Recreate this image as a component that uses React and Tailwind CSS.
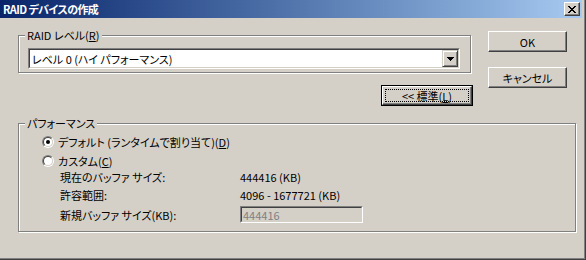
import React from 'react';

const raised =
  'border border-t-white border-l-white border-r-[#404040] border-b-[#404040] shadow-[inset_-1px_-1px_0_#808080]';
const sunkenOuter = 'border border-t-[#808080] border-l-[#808080] border-r-white border-b-white';
const sunkenInner = 'border border-t-[#404040] border-l-[#404040] border-r-[#d4d0c8] border-b-[#d4d0c8]';

const xRows = ['11000011', '01100110', '00111100', '00011000', '00111100', '01100110', '11000011'];

const CloseGlyph = () => (
  <svg width="8" height="7" viewBox="0 0 8 7" shapeRendering="crispEdges">
    {xRows.flatMap((row, y) =>
      row.split('').map((c, x) => (c === '1' ? <rect key={`${x}-${y}`} x={x} y={y} width="1" height="1" fill="#000" /> : null))
    )}
  </svg>
);

const Key = ({ children }) => <span className="underline underline-offset-[1px]">{children}</span>;

function GroupBox({ label, className, children }) {
  return (
    <div className={`relative border border-[#808080] shadow-[inset_1px_1px_0_#fff,1px_1px_0_#fff] ${className}`}>
      <span className="absolute left-[6px] top-[-8px] px-[2px] bg-[#d4d0c8] leading-[14px]">{label}</span>
      {children}
    </div>
  );
}

const Radio = ({ checked }) => (
  <div className="w-[12px] h-[12px] shrink-0 rounded-full border border-t-[#808080] border-l-[#808080] border-r-white border-b-white">
    <div className="w-full h-full rounded-full bg-white flex items-center justify-center border border-t-[#404040] border-l-[#404040] border-r-[#d4d0c8] border-b-[#d4d0c8]">
      {checked && <div className="w-[4px] h-[4px] rounded-full bg-black" />}
    </div>
  </div>
);

const Button = ({ children }) => (
  <button className={`w-[79px] h-[21px] flex items-center justify-center ${raised}`}>{children}</button>
);

export default function App() {
  return (
    <div className="w-[586px] h-[260px] overflow-hidden bg-[#d4d0c8] border-r border-b border-[#404040] text-[11px] leading-[14px] text-black font-['Noto_Sans_CJK_JP',sans-serif] [font-feature-settings:'palt']">
      <div className="h-full flex flex-col border-r border-b border-[#808080] pr-[2px] pb-[2px]">
        {/* title bar */}
        <div className="h-[18px] shrink-0 flex items-center pl-[3px] pr-[2px] bg-linear-to-r from-[#0a246a] to-[#a6caf0]">
          <span className="font-bold text-white tracking-[-0.6px]">RAID デバイスの作成</span>
          <button className={`ml-auto w-[16px] h-[14px] bg-[#d4d0c8] flex items-center justify-center ${raised}`}>
            <CloseGlyph />
          </button>
        </div>

        {/* client */}
        <div className="flex-1 pl-[18px] pt-[13px]">
          <div className="flex">
            <div className="w-[455px] pt-[4px] flex flex-col items-start">
              <GroupBox
                className="w-[453px] h-[38px] pl-[9px] pt-[12px]"
                label={<>RAID レベル(<Key>R</Key>)</>}
              >
                <div className={`w-[432px] h-[21px] ${sunkenOuter}`}>
                  <div className={`h-full flex items-center bg-white ${sunkenInner}`}>
                    <span className="pl-[2px]">レベル 0 (ハイ パフォーマンス)</span>
                    <div className="ml-auto w-[16px] h-full flex items-center justify-center border border-t-[#d4d0c8] border-l-[#d4d0c8] border-r-[#404040] border-b-[#404040] bg-[#d4d0c8] shadow-[inset_1px_1px_0_white,inset_-1px_-1px_0_#808080]">
                      <svg width="7" height="4" viewBox="0 0 7 4" shapeRendering="crispEdges">
                        <path d="M0 0h7v1h-1v1h-1v1h-1v1h-1v-1h-1v-1h-1v-1h-1z" fill="#000" />
                      </svg>
                    </div>
                  </div>
                </div>
              </GroupBox>
              <button className="self-end mt-[12px] w-[92px] h-[21px] border border-black flex">
                <div className={`flex-1 flex p-[2px] ${raised}`}>
                  <div className="flex-1 flex items-center justify-center border border-dotted border-black">
                    {'<<'} 標準(<Key>L</Key>)
                  </div>
                </div>
              </button>
            </div>
            <div className="ml-[15px] flex flex-col gap-[15px]">
              <Button>OK</Button>
              <Button>キャンセル</Button>
            </div>
          </div>

          <GroupBox className="mt-[17px] w-[558px] h-[109px] pt-[11px]" label="パフォーマンス">
            <div className="flex flex-col">
              <div className="h-[14px] flex items-center gap-[4px] pl-[23px]">
                <Radio checked />
                <span>デフォルト (ランタイムで割り当て)(<Key>D</Key>)</span>
              </div>
              <div className="h-[14px] mt-[5px] flex items-center gap-[4px] pl-[23px]">
                <Radio />
                <span>カスタム(<Key>C</Key>)</span>
              </div>
              <div className="h-[14px] mt-[2px] flex items-center pl-[41px]">
                <span className="w-[180px]">現在のバッファ サイズ:</span>
                <span>444416 (KB)</span>
              </div>
              <div className="h-[14px] mt-[4px] flex items-center pl-[41px]">
                <span className="w-[180px]">許容範囲:</span>
                <span>4096 - 1677721 (KB)</span>
              </div>
              <div className="h-[17px] mt-[4px] flex items-center pl-[41px]">
                <span className="w-[180px]">新規バッファ サイズ(KB):</span>
                <div className={`w-[123px] h-[17px] ${sunkenOuter}`}>
                  <div className={`h-full flex items-center pl-[1px] text-[#808080] ${sunkenInner}`}>444416</div>
                </div>
              </div>
            </div>
          </GroupBox>
        </div>
      </div>
    </div>
  );
}
